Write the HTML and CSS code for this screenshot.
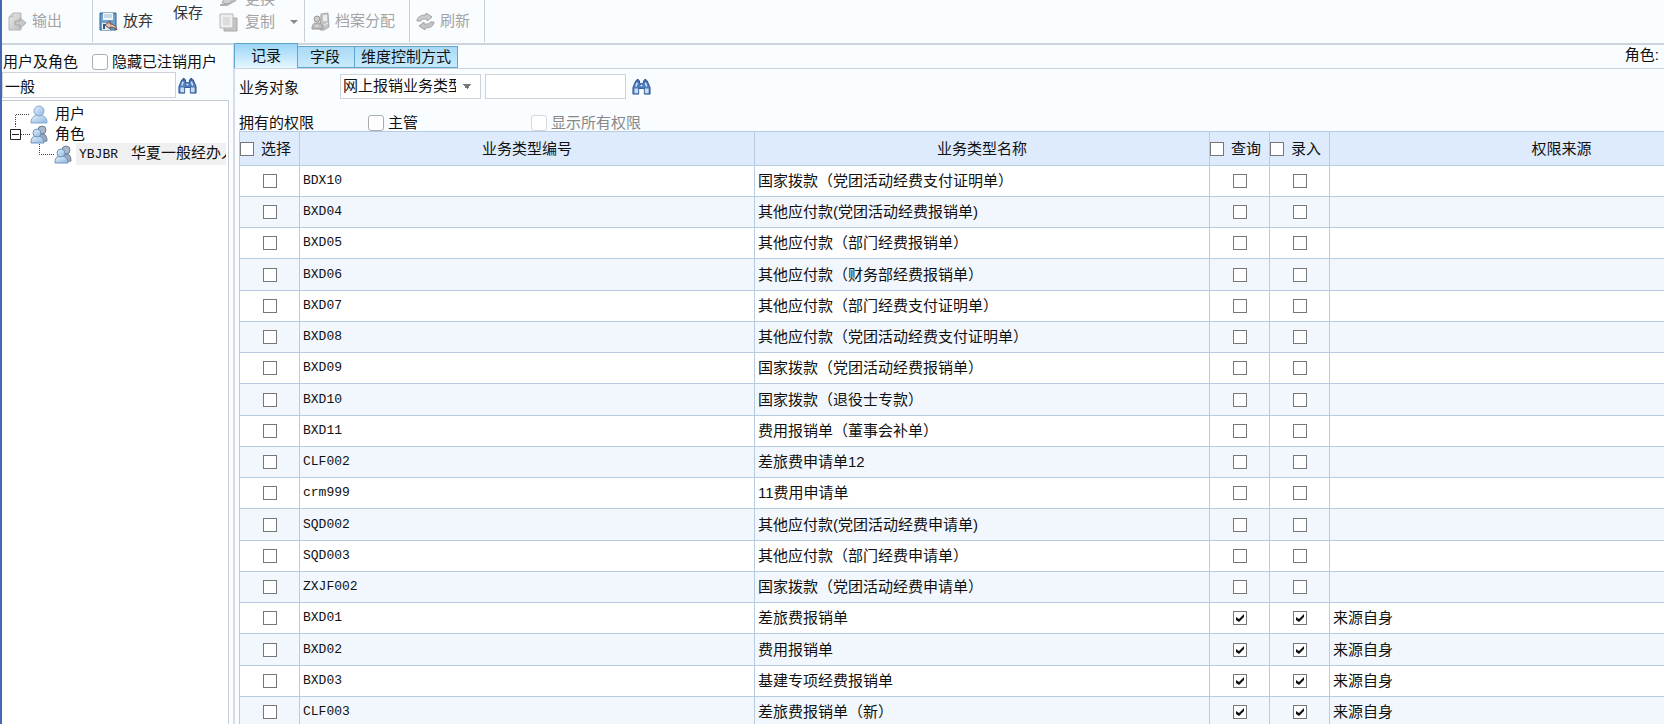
FILE: index.html
```html
<!DOCTYPE html>
<html lang="zh-CN">
<head>
<meta charset="utf-8">
<title>权限分配</title>
<link rel="stylesheet" href="styles.css">
</head>
<body>
<svg class="defs" aria-hidden="true">
  <defs>
    <linearGradient id="blue" x1="0" y1="0" x2="1" y2="1"><stop offset="0" stop-color="#e4f1fc"/><stop offset="1" stop-color="#8fb6de"/></linearGradient>
    <linearGradient id="grey" x1="0" y1="0" x2="1" y2="1"><stop offset="0" stop-color="#ececec"/><stop offset="1" stop-color="#bdbdbd"/></linearGradient>
  </defs>
  <symbol id="binoculars" viewBox="0 0 20 18">
    <path d="M4 3h4v3h4V3h4l3 7v7h-6v-6H7v6H1v-7z" fill="#4f7dbd" stroke="#27508f"/>
    <path d="M2.500 11h4v5h-4zM13.500 11h4v5h-4z" fill="#c5dcf3"/>
    <path d="M5.500 5L4 9M14 5l1.500 4M9 8h2" stroke="#dcebfa" stroke-width="1.500"/>
    <path d="M5 1h2v2H5zM13 1h2v2h-2z" fill="#27508f"/>
  </symbol>
  <symbol id="person" viewBox="0 0 18 19">
    <path d="M1 18c0-5 2-6 5-8h6c3 2 5 3 5 8z" fill="url(#blue)" stroke="#86a9cf"/>
    <ellipse cx="9" cy="6" rx="5" ry="5" fill="url(#blue)" stroke="#86a9cf"/>
  </symbol>
  <symbol id="people" viewBox="0 0 18 19">
    <path d="M9 17c0-5 0-6 2-8h3c2 1 3 3 3 7z" fill="#9aa9ba" stroke="#6e7f93"/>
    <circle cx="12" cy="5" r="4" fill="#a9b7c6" stroke="#6e7f93"/>
    <path d="M1 18c0-4 1-6 4-7h4c3 1 5 3 5 7z" fill="url(#blue)" stroke="#6f96c2"/>
    <circle cx="7" cy="8" r="4" fill="url(#blue)" stroke="#6f96c2"/>
  </symbol>
</svg>

<div class="app">
  <header class="toolbar">
    <div class="group first">
      <button class="tool" disabled>
        <svg class="icon" viewBox="0 0 19 19"><path d="M1 5l4-4h8v17H1z" fill="url(#grey)" stroke="#b5b5b5"/><path d="M1 5h4V1" fill="none" stroke="#b5b5b5"/><path d="M7 9h5V6l6 5-6 5v-3H7z" fill="#c9c9c9" stroke="#a5a5a5"/></svg>
        输出</button>
    </div>
    <div class="group second">
      <button class="tool">
        <svg class="icon" viewBox="0 0 19 19"><path d="M1 1h16v17H1z" fill="#6fa3cf" stroke="#2c5f8e"/><path d="M4 1h10v7H4z" fill="#f2f7fb"/><path d="M5 3h8M5 5h8" stroke="#9dbad4"/><path d="M3 11h8v7H3z" fill="#e6ebf0"/><path d="M4 12h2v5H4z" fill="#2c5f8e"/><path d="M6 13l5-4v3c4 0 6 2 7 6-2-2-4-3-7-3v2z" fill="#e3c3b0" stroke="#70483c"/></svg>
        放弃</button>
      <button class="tool save">保存</button>
      <div class="stack">
        <button class="tool" disabled>
          <svg class="icon" viewBox="0 0 19 19"><path d="M3 13l3-6 9-6 3 4-8 9z" fill="#d0d0d0" stroke="#a5a5a5"/><path d="M1 15h7l9-5" fill="none" stroke="#b0b0b0" stroke-width="2"/></svg>
          更换</button>
        <button class="tool" disabled>
          <svg class="icon" viewBox="0 0 19 19"><path d="M5 5h13v13H5z" fill="#c4c4c4" stroke="#a8a8a8"/><path d="M1 1h13v14H1z" fill="#eee" stroke="#b8b8b8"/><path d="M4 4h7v8H4z" fill="#dcdcdc"/></svg>
          复制<span class="caret"></span></button>
      </div>
    </div>
    <div class="group third">
      <button class="tool" disabled>
        <svg class="icon" viewBox="0 0 19 19"><path d="M10 2l7-1 1 14-5 3H9z" fill="#c4c4c4" stroke="#aaa"/><path d="M12 3h4v6h-4z" fill="#eee"/><circle cx="6" cy="7" r="3" fill="#ccc" stroke="#999"/><path d="M1 17c0-4 1-5 3-6h4c3 1 4 2 4 6z" fill="#bcbcbc" stroke="#999"/><path d="M4 14h4M13 13l4-2" stroke="#eee"/></svg>
        档案分配</button>
    </div>
    <div class="group fourth">
      <button class="tool" disabled>
        <svg class="icon" viewBox="0 0 19 19"><path d="M1 9c0-4 4-6 9-6V1l6 4-5 4V7C7 7 6 7 5 9z" fill="#ccc" stroke="#a2a2a2"/><path d="M18 10c0 4-4 6-9 6v2l-6-4 5-4v2c4 0 5 0 6-2z" fill="#c4c4c4" stroke="#a2a2a2"/></svg>
        刷新</button>
    </div>
  </header>

  <div class="body">
    <aside class="side">
      <div class="side-head">
        <label for="user-search">用户及角色</label>
        <label class="check"><input type="checkbox" class="soft">隐藏已注销用户</label>
      </div>
      <div class="search">
        <input id="user-search" type="text" value="一般">
        <button class="find" aria-label="查找"><svg class="icon"><use href="#binoculars"/></svg></button>
      </div>
      <ul class="tree">
        <li class="node"><svg class="lines" viewBox="0 0 28 20"><path d="M13.500 20V10.500H28" /></svg><svg class="who"><use href="#person"/></svg><span class="node-name">用户</span></li>
        <li class="node"><svg class="lines" viewBox="0 0 28 20"><path d="M13.500 0V4M19 10.500H28"/><path class="box" d="M8.500 5.500h10v10h-10zM10 10.500h7"/></svg><svg class="who"><use href="#people"/></svg><span class="node-name">角色</span></li>
        <li class="node child"><svg class="lines" viewBox="0 0 28 20"><path d="M13.500 0V10.500H28"/></svg><svg class="who"><use href="#people"/></svg><span class="node-name current"><span class="code">YBJBR</span>华夏一般经办人</span></li>
      </ul>
    </aside>

    <main class="main">
      <div class="tabbar">
        <div class="tabs" role="tablist">
          <button class="tab active" role="tab" aria-selected="true">记录</button>
          <button class="tab" role="tab">字段</button>
          <button class="tab" role="tab">维度控制方式</button>
        </div>
        <span class="role">角色:</span>
      </div>
      <div class="content">
        <div class="filter">
          <label class="filter-label" for="object">业务对象</label>
          <select id="object"><option>网上报销业务类型</option></select>
          <input class="keyword" type="text" aria-label="关键字">
          <button class="find" aria-label="查找"><svg class="icon"><use href="#binoculars"/></svg></button>
        </div>
        <div class="owned">
          <span class="owned-label">拥有的权限</span>
          <label class="check manager"><input type="checkbox" class="soft">主管</label>
          <label class="check off"><input type="checkbox" class="soft" disabled>显示所有权限</label>
        </div>
        <div class="table-wrap">
          <table>
            <colgroup><col class="c-tick"><col class="c-text"><col class="c-text"><col class="c-tick"><col class="c-tick"><col></colgroup>
            <thead>
              <tr>
                <th><label class="pick"><input type="checkbox">选择</label></th>
                <th>业务类型编号</th>
                <th>业务类型名称</th>
                <th><label class="pick"><input type="checkbox">查询</label></th>
                <th><label class="pick"><input type="checkbox">录入</label></th>
                <th>权限来源</th>
              </tr>
            </thead>
            <tbody id="rows"></tbody>
          </table>
        </div>
      </div>
    </main>
  </div>
</div>
<script src="rows.js"></script>
</body>
</html>
```
FILE: styles.css
```css
* { box-sizing: border-box; }
body {
  margin: 0;
  background: #fafdff;
  color: #111;
  font: 15px/20px "Liberation Sans", "Noto Sans CJK SC", sans-serif;
}
button, input, select { font: inherit; color: inherit; margin: 0; }
button { border: 0; padding: 0; background: none; }
.defs { position: absolute; width: 0; height: 0; }

.app {
  height: 100vh;
  display: flex;
  flex-direction: column;
  overflow: hidden;
  border-left: 2px solid #4668b0;
}

.toolbar {
  flex: none;
  display: flex;
  height: 45px;
  padding-bottom: 1px;
  border-bottom: 2px solid #ccd3da;
}
.group {
  display: flex;
  align-items: center;
  border-right: 1px solid #c9ced4;
  padding-left: 6px;
}
.first { width: 91px; }
.second { width: 212px; align-items: stretch; }
.third { width: 105px; }
.fourth { width: 75px; }
.tool { display: flex; align-items: center; gap: 5px; white-space: nowrap; color: #333; }
.tool:disabled { color: #a3a3a3; }
.icon { width: 19px; height: 19px; flex: none; display: block; }
.save { align-self: flex-start; height: 26px; margin: 0 16px 0 20px; }
.stack { display: flex; flex-direction: column; justify-content: flex-end; gap: 3px; padding-bottom: 10px; }
.stack .tool { gap: 7px; }
.caret { margin-left: 8px; border: 4px solid transparent; border-top-color: #888; border-bottom: 0; }

.body { flex: 1; display: flex; min-height: 0; }
.side { width: 232px; flex: none; display: flex; flex-direction: column; border-right: 1px solid #d5dce4; }
.side-head { display: flex; align-items: center; justify-content: space-between; height: 27px; padding: 6px 16px 0 1px; }
.check { display: flex; align-items: center; gap: 4px; }
.search { display: flex; align-items: center; gap: 2px; }
.search input { width: 174px; height: 26px; padding: 0 2px; border: 1px solid #ccd3da; background: #fff; }
.find { display: flex; }
.tree {
  flex: 1;
  margin: 2px 4px 0 0;
  padding: 3px 2px 3px 0;
  list-style: none;
  border: 1px solid #c5ccd4;
  border-width: 1px 1px 0 0;
  background: #fff;
}
.node { display: flex; align-items: center; height: 20px; }
.lines { width: 28px; height: 20px; flex: none; fill: none; stroke: #444; stroke-dasharray: 1 1; }
.lines .box { stroke-dasharray: none; stroke: #222; }
.who { width: 18px; height: 19px; flex: none; }
.child { padding-left: 24px; }
.node-name { padding-left: 7px; white-space: nowrap; }
.current { flex: 1; min-width: 0; margin-left: 4px; padding-left: 3px; background: #f0f0f0; overflow: hidden; }
.current .code { margin-right: 13px; }
.code { font-family: "Liberation Mono", monospace; font-size: 13px; }

.main { flex: 1; min-width: 0; display: flex; flex-direction: column; }
.tabbar { display: flex; justify-content: space-between; height: 24px; border-bottom: 1px solid #ccd3da; }
.tabs { display: flex; align-items: flex-end; }
.tab {
  height: 22px;
  padding: 0 6px;
  border: 1px solid #62a5cc;
  border-left: 0;
  background: linear-gradient(#a9daf6, #c8eafc);
}
.tab:nth-child(2) { padding: 0 14px 0 12px; }
.tab.active {
  height: 25px;
  padding: 0 16px;
  border: 1px solid #62a5cc;
  border-bottom: 0;
  background: linear-gradient(#9bd5f6, #e6f7ff);
}
.role { padding-right: 5px; }
.content { flex: 1; min-height: 0; display: flex; flex-direction: column; border-left: 1px solid #d5dce4; padding-left: 4px; }
.filter { display: flex; align-items: center; height: 34px; }
.filter-label { width: 101px; padding-top: 4px; }
select {
  appearance: none;
  width: 141px;
  height: 25px;
  padding: 0 24px 0 2px;
  border: 1px solid #ccd3da;
  border-radius: 0;
  background:
    linear-gradient(to bottom right, #777 50%, transparent 50%) 126px 9px / 5px 5px no-repeat,
    linear-gradient(to bottom left, #777 50%, transparent 50%) 121px 9px / 5px 5px no-repeat,
    #fff;
}
.keyword { width: 141px; height: 25px; margin: 0 6px 0 4px; border: 1px solid #ccd3da; background: #fff; }
.owned { display: flex; align-items: flex-end; height: 28px; line-height: 16px; }
.owned-label { width: 129px; }
.manager { width: 163px; }
.off { color: #888; }

input[type="checkbox"] {
  appearance: none;
  flex: none;
  display: block;
  width: 14px;
  height: 14px;
  border: 1px solid #777;
  background: #fff;
}
input[type="checkbox"].soft {
  width: 16px;
  height: 16px;
  border-color: #a9adb2;
  border-radius: 3px;
}
input[type="checkbox"].soft:disabled { border-color: #d5d8db; }
input[type="checkbox"]:checked {
  background: #fff url("data:image/svg+xml,%3Csvg xmlns='http://www.w3.org/2000/svg' viewBox='0 0 12 12'%3E%3Cpath d='M2 5l3 2 5-5v3L5 10 2 8z' fill='%23111'/%3E%3C/svg%3E") center / 12px 12px no-repeat;
}

.table-wrap { flex: 1; min-height: 0; overflow: hidden; }
table { width: 1555px; table-layout: fixed; border-collapse: collapse; background: #fff; }
.c-tick { width: 60px; }
.c-text { width: 455px; }
th, td { border: 1px solid #b7cbe1; padding: 0 3px; text-align: left; white-space: nowrap; }
th { height: 34px; padding: 0; background: #deebfc; font-weight: normal; text-align: center; }
td { height: 31px; }
tbody tr:nth-child(4n) td { height: 32px; }
tbody tr:nth-child(even) { background: #f1f7fd; }
.pick { display: flex; align-items: center; gap: 7px; }
.tick input { margin: 0 auto; }
```
FILE: rows.js
```
const rows = [
  ["BDX10", "国家拨款（党团活动经费支付证明单）"],
  ["BXD04", "其他应付款(党团活动经费报销单)"],
  ["BXD05", "其他应付款（部门经费报销单）"],
  ["BXD06", "其他应付款（财务部经费报销单）"],
  ["BXD07", "其他应付款（部门经费支付证明单）"],
  ["BXD08", "其他应付款（党团活动经费支付证明单）"],
  ["BXD09", "国家拨款（党团活动经费报销单）"],
  ["BXD10", "国家拨款（退役士专款）"],
  ["BXD11", "费用报销单（董事会补单）"],
  ["CLF002", "差旅费申请单12"],
  ["crm999", "11费用申请单"],
  ["SQD002", "其他应付款(党团活动经费申请单)"],
  ["SQD003", "其他应付款（部门经费申请单）"],
  ["ZXJF002", "国家拨款（党团活动经费申请单）"],
  ["BXD01", "差旅费报销单", true],
  ["BXD02", "费用报销单", true],
  ["BXD03", "基建专项经费报销单", true],
  ["CLF003", "差旅费报销单（新）", true],
];

const tick = (name, on) =>
  `<td class="tick"><input type="checkbox" aria-label="${name}"${on ? " checked" : ""}></td>`;

document.getElementById("rows").innerHTML = rows.map(([code, name, own]) => `
  <tr>${tick("选择 " + code)}<td class="code">${code}</td><td>${name}</td>
  ${tick("查询 " + code, own)}${tick("录入 " + code, own)}<td>${own ? "来源自身" : ""}</td></tr>`).join("");
```
